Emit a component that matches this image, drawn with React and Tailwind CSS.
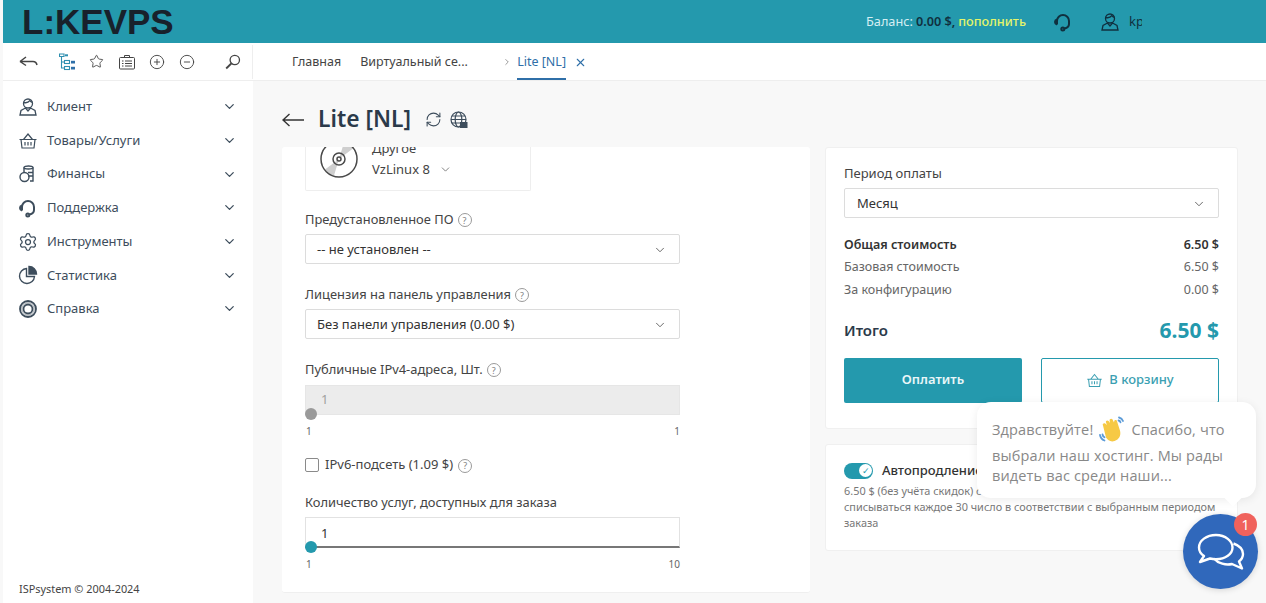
import React from 'react';
import { ChevronDown, CirclePlus, CircleMinus, Star, X, RefreshCw, Settings, ChevronRight } from 'lucide-react';

const ink = '#3d4d5c';

const UserIcon = ({ size = 20, color = ink }) => (
  <svg width={size} height={size} viewBox="0 0 20 20" fill="none" stroke={color} strokeWidth="1.3">
    <circle cx="10" cy="6.5" r="4.5" />
    <path d="M5.6 5.5c2.5.6 5-.2 6.2-1.8.6.9 1.500 1.400 2.600 1.600" />
    <path d="M7.500 11l-4.500 2.500-1 4.500h16l-1-4.500-4.500-2.500-2.500 3z" />
  </svg>
);

const BasketIcon = ({ size = 20, color = ink }) => (
  <svg width={size} height={size} viewBox="0 0 20 20" fill="none" stroke={color} strokeWidth="1.2">
    <path d="M1.500 8.500h17M3 8.500l1 8.500h12l1-8.500M5.500 8.500L10 3l4.500 5.500" />
    <path d="M7 11v3.500M10 11v3.500M13 11v3.500" />
  </svg>
);

const CoinsIcon = () => (
  <svg width="20" height="20" viewBox="0 0 20 20" fill="none" stroke={ink} strokeWidth="1.4">
    <path d="M6 8V3.500C6 2.700 8 2 10.500 2S15 2.700 15 3.500V17h-3" />
    <path d="M6 3.500c0 .8 2 1.500 4.500 1.500S15 4.300 15 3.500M10 8.500h5M10 12h5" />
    <circle cx="6.500" cy="13" r="4.500" />
  </svg>
);

const HeadsetIcon = ({ size = 20, color = ink, width = 2 }) => (
  <svg width={size} height={size} viewBox="0 0 20 20" fill="none" stroke={color} strokeWidth={width}>
    <path d="M4 12.500V9a6 6 0 0 1 12 0v3c0 2.500-2 4-4.500 4.500" />
    <path d="M4 7.500c-1.500.5-2 1.500-2 2.500s.5 2 2 2.500" fill={color} />
    <circle cx="9.800" cy="17" r="1.500" />
  </svg>
);

const PieIcon = () => (
  <svg width="20" height="20" viewBox="0 0 20 20" fill="none" stroke={ink} strokeWidth="1.4">
    <path d="M8.500 3.500a7.500 7.500 0 1 0 8 8h-8z" />
    <path d="M11 1.500a7.500 7.500 0 0 1 7.500 7.500H11z" fill={ink} />
  </svg>
);

const RingIcon = () => (
  <svg width="20" height="20" viewBox="0 0 20 20" fill="none" stroke={ink}>
    <circle cx="10" cy="10" r="8" strokeWidth="1.800" />
    <circle cx="10" cy="10" r="4.500" strokeWidth="1.800" />
    <circle cx="10" cy="10" r="6.200" strokeWidth="1" opacity="0.5" />
  </svg>
);

const TreeIcon = () => (
  <svg width="16" height="18" viewBox="0 0 16 18" fill="none" stroke="#2f8fb0" strokeWidth="1.100">
    <path d="M0.500 1h4.500v2.500H0.500zM2.500 3.500V15h3M2.500 9h3" />
    <rect x="6" y="1.300" width="3" height="2" fill="#2f8fb0" stroke="none" />
    <rect x="5.500" y="7.500" width="5" height="3" />
    <rect x="12" y="7.800" width="4" height="2.700" fill="#2f6fa8" stroke="none" />
    <rect x="5.500" y="13.500" width="5" height="3" />
    <rect x="12" y="13.800" width="4" height="2.700" fill="#2f6fa8" stroke="none" />
  </svg>
);

const CaseIcon = () => (
  <svg width="16" height="16" viewBox="0 0 16 16" fill="none" stroke="#444" strokeWidth="1">
    <rect x="0.500" y="3.500" width="15" height="11.500" rx="1" />
    <path d="M5.500 3.500V1.500h5v2M3 7h1.500M6 7h7M3 9.500h1.500M6 9.500h7M3 12h1.500M6 12h7" />
  </svg>
);

const SearchIcon = () => (
  <svg width="16" height="16" viewBox="0 0 16 16" fill="none" stroke="#444" strokeWidth="1.300">
    <circle cx="9.800" cy="6" r="4.700" />
    <path d="M6.300 9.500L1.200 14.500" strokeWidth="1.800" />
  </svg>
);

const BackIcon = () => (
  <svg width="19" height="12" viewBox="0 0 19 12" fill="none" stroke="#444" strokeWidth="1.500">
    <path d="M1 5.500L7 1M1 5.500L7 9.500M1 5.500h13c2 0 3.500 1.200 4 3.500" />
  </svg>
);

const TitleArrow = () => (
  <svg width="22" height="14" viewBox="0 0 22 14" fill="none" stroke="#333" strokeWidth="1.400">
    <path d="M1 7h21M7.500 1L1 7l6.500 6" />
  </svg>
);

const WebIcon = () => (
  <svg width="18" height="18" viewBox="0 0 18 18" fill="none" stroke={ink} strokeWidth="1.200">
    <circle cx="8.500" cy="8.500" r="7.500" />
    <ellipse cx="8.500" cy="8.500" rx="3.300" ry="7.500" />
    <path d="M1 8.500h15M2 5h13M2 12h13" />
    <rect x="10" y="11" width="7.500" height="6" fill={ink} stroke="none" />
  </svg>
);

const DiscIcon = () => (
  <svg width="38" height="38" viewBox="0 0 38 38" fill="none" stroke="#4a4a4a" strokeWidth="1.500">
    <path d="M19 19L24 2.500a18 18 0 0 1 9 6zM19 19L14 35.500a18 18 0 0 1-9-6z" fill="#cfcfcf" stroke="none" />
    <circle cx="19" cy="19" r="18" />
    <circle cx="19" cy="19" r="6" />
    <circle cx="19" cy="19" r="2" />
  </svg>
);

const HelpMark = () => (
  <span className="inline-flex h-[14px] w-[14px] items-center justify-center rounded-full border border-[#9a9a9a] text-[9px] leading-none text-[#808080]">?</span>
);

const WaveIcon = () => (
  <svg width="28" height="28" viewBox="0 0 28 28" fill="none">
    <path d="M5 9.500c-1-1.500.8-3 2.200-2L9 9 8 6.500c-.7-1.700 1.500-2.800 2.600-1.400l1.400 2L11.600 4.500c-.3-1.800 2.100-2.500 3-.9l1.400 3 .2-1.400c.3-1.700 2.600-1.500 2.900.2l3 9.600c1 4.500-1 8.500-5.500 10-3.800 1.200-6.800-.5-8.600-3.500z" fill="#f6c945" />
    <path d="M21 1.500c1.800.4 3.300 1.500 4 3.500M20.500 4.500c1 .2 1.700.8 2 1.800M2 19c.4 2.500 1.800 4.400 4.500 5.500M4.500 18.500c.2 1.300.8 2.200 2 2.800" stroke="#5b9bd8" strokeWidth="1.800" strokeLinecap="round" />
  </svg>
);

const ChatIcon = () => (
  <svg width="48" height="40" viewBox="0 0 48 40" fill="none" stroke="#fff" strokeWidth="2.400" strokeLinejoin="round">
    <path d="M19 3C9.500 3 2 8.500 2 15.500c0 3.500 2 6.500 5 8.500L3 30l10-3.500c2 .5 4 .7 6 .7 9.500 0 16.500-5.300 16.500-11.700S28.500 3 19 3z" />
    <path d="M36.500 11.500C42 13.500 46 17.500 46 22c0 3-1.500 5.500-4 7.500l3 7-10-4.500c-6 1.500-14-.5-18-5.500" />
  </svg>
);

const menu = [
  { label: 'Клиент', icon: <UserIcon /> },
  { label: 'Товары/Услуги', icon: <BasketIcon /> },
  { label: 'Финансы', icon: <CoinsIcon /> },
  { label: 'Поддержка', icon: <HeadsetIcon /> },
  { label: 'Инструменты', icon: <Settings size={20} color={ink} strokeWidth={1.5} /> },
  { label: 'Статистика', icon: <PieIcon /> },
  { label: 'Справка', icon: <RingIcon /> },
];

const Field = ({ label, value }) => (
  <div className="flex flex-col">
    <div className="flex h-[20px] items-center gap-[4px] text-[12.9px] text-[#444]">
      {label} <HelpMark />
    </div>
    <div className="mt-[4px] flex h-[30px] w-[375px] items-center justify-between rounded-[2px] border border-[#dcdcdc] bg-white pl-[11px] pr-[12px] pt-[2px] text-[13px] text-[#333]">
      {value}
      <ChevronDown size={14} color="#555" strokeWidth={1.5} />
    </div>
  </div>
);

const Slider = ({ value, max, disabled }) => (
  <div className="w-[375px]">
    <div className={disabled
      ? 'relative flex h-[30px] items-center border border-[#e6e6e6] bg-[#ececec] pl-[15px] text-[13px] text-[#a0a0a0]'
      : 'relative flex h-[31px] items-center border border-b-2 border-[#e2e2e2] border-b-[#777] bg-white pl-[15px] pt-[3px] text-[13px] text-[#333]'}>
      {value}
      <span className={disabled
        ? 'absolute bottom-[-6px] left-[-1px] h-[12px] w-[12px] rounded-full bg-[#9a9a9a]'
        : 'absolute bottom-[-7px] left-[-1px] h-[12px] w-[12px] rounded-full bg-[#2499ad]'} />
    </div>
    <div className="mt-[9px] flex justify-between text-[10px] leading-[14px] text-[#666]">
      <span className="pl-[1px]">1</span>
      <span>{max}</span>
    </div>
  </div>
);

const PriceRow = ({ label, value, strong }) => (
  <div className={strong
    ? 'flex h-[22.5px] items-center justify-between text-[12.5px] font-semibold text-[#333]'
    : 'flex h-[22.5px] items-center justify-between text-[12.5px] text-[#666]'}>
    <span>{label}</span>
    <span>{value}</span>
  </div>
);

export default function App() {
  return (
    <div className="relative flex h-[603px] w-[1266px] flex-col overflow-hidden bg-[#f8f8f8] pl-[3px] font-['Noto_Sans',sans-serif]">
      <header className="flex h-[43px] shrink-0 items-center justify-between bg-[#2499ad] pl-[19px] pr-[124px]">
        <span className="font-['Liberation_Sans',sans-serif] text-[35px] font-bold leading-none text-[#18212b]">L:KEVPS</span>
        <div className="flex items-center text-[12.7px]">
          <span className="text-[#d5eef2]">Баланс:</span>
          <span className="ml-[3px] font-semibold text-[#10303f]">0.00 $,</span>
          <span className="ml-[3px] font-medium text-[#e4f56a]">пополнить</span>
          <span className="ml-[27px]"><HeadsetIcon size={20} color="#10303f" width={2} /></span>
          <span className="ml-[27px]"><UserIcon size={20} color="#10303f" /></span>
          <span className="ml-[9px] w-[13px] overflow-hidden text-[13px] text-[#10303f]">kp</span>
        </div>
      </header>

      <div className="flex h-[38px] shrink-0 items-center border-b border-[#eeeeee] bg-white">
        <div className="flex w-[250px] items-center border-r border-[#eeeeee] py-[8px] pl-[16px]">
          <BackIcon />
          <span className="ml-[21px]"><TreeIcon /></span>
          <span className="ml-[14px]"><Star size={15} color="#444" strokeWidth={1.4} /></span>
          <span className="ml-[15px]"><CaseIcon /></span>
          <span className="ml-[14px]"><CirclePlus size={16} color="#444" strokeWidth={1.4} /></span>
          <span className="ml-[14px]"><CircleMinus size={16} color="#444" strokeWidth={1.4} /></span>
          <span className="ml-[30px]"><SearchIcon /></span>
        </div>
        <nav className="flex h-full items-center pl-[39px] pt-[1px] text-[12.5px] text-[#444]">
          <span>Главная</span>
          <span className="ml-[19px] w-[126px]">Виртуальный се...</span>
          <ChevronRight size={10} color="#888" className="ml-[16px]" />
          <span className="relative ml-[5px] flex h-full items-center text-[#2f6fa8]">
            Lite [NL]
            <span className="absolute bottom-0 left-0 h-[2px] w-full bg-[#2f6fa8]" />
          </span>
          <X size={13} color="#2f6fa8" strokeWidth={2} className="ml-[8px]" />
        </nav>
      </div>

      <div className="flex min-h-0 flex-1">
        <aside className="flex w-[250px] shrink-0 flex-col justify-between bg-white pb-[7px] pl-[15px] pr-[16px] pt-[9px]">
          <ul className="flex flex-col">
            {menu.map((item) => (
              <li key={item.label} className="flex h-[33.7px] items-center text-[13px] text-[#3d4d5c]">
                <span className="flex w-[29px] shrink-0">{item.icon}</span>
                <span className="flex-1">{item.label}</span>
                <ChevronDown size={15} color={ink} strokeWidth={2} />
              </li>
            ))}
          </ul>
          <span className="ml-[1px] text-[10.9px] leading-[14px] text-[#444]">ISPsystem © 2004-2024</span>
        </aside>

        <main className="min-w-0 flex-1 pl-[29px]">
          <div className="flex h-[66px] items-center pt-[11px]">
            <TitleArrow />
            <h1 className="ml-[14px] text-[22.8px] font-semibold text-[#2b3a4a]">Lite [NL]</h1>
            <RefreshCw size={17} color={ink} strokeWidth={1.5} className="ml-[14px]" />
            <span className="ml-[8px]"><WebIcon /></span>
          </div>

          <div className="flex items-start">
            <section className="h-[446px] w-[528px] overflow-hidden rounded-[3px] border-b border-[#efefef] bg-white pl-[23px]">
              <div className="flex h-[44px] w-[226px] items-start overflow-hidden rounded-b-[2px] border border-t-0 border-[#eeeeee] pl-[14px]">
                <span className="mt-[-7px] flex"><DiscIcon /></span>
                <div className="ml-[14px] mt-[-9px] flex flex-col text-[13px] leading-[21px] text-[#444]">
                  <span>Другое</span>
                  <span className="flex items-center gap-[9px]">VzLinux 8 <ChevronDown size={13} color="#666" strokeWidth={1.5} /></span>
                </div>
              </div>
              <div className="mt-[19px]"><Field label="Предустановленное ПО" value="-- не установлен --" /></div>
              <div className="mt-[21px]"><Field label="Лицензия на панель управления" value="Без панели управления (0.00 $)" /></div>
              <div className="mt-[21px] flex flex-col">
                <div className="flex h-[20px] items-center gap-[4px] text-[12.9px] text-[#444]">Публичные IPv4-адреса, Шт. <HelpMark /></div>
                <div className="mt-[5px]"><Slider value="1" max="1" disabled /></div>
              </div>
              <label className="mt-[17px] flex h-[20px] items-center text-[13px] text-[#444]">
                <span className="h-[14px] w-[14px] rounded-[2px] border border-[#8a8a8a] bg-white" />
                <span className="ml-[6px]">IPv6-подсеть (1.09 $)</span>
                <span className="ml-[5px]"><HelpMark /></span>
              </label>
              <div className="mt-[18px] flex flex-col">
                <div className="flex h-[20px] items-center text-[12.9px] text-[#444]">Количество услуг, доступных для заказа</div>
                <div className="mt-[4px]"><Slider value="1" max="10" /></div>
              </div>
            </section>

            <div className="ml-[15px] flex w-[413px] flex-col gap-[15px]">
              <section className="h-[282px] rounded-[3px] border border-[#f0f0f0] bg-white px-[18px] pt-[15px]">
                <div className="text-[13px] leading-[20px] text-[#444]">Период оплаты</div>
                <div className="mt-[5px] flex h-[30px] items-center justify-between rounded-[2px] border border-[#dcdcdc] px-[12px] pt-[2px] text-[13px] text-[#333]">
                  Месяц
                  <ChevronDown size={14} color="#555" strokeWidth={1.5} />
                </div>
                <div className="mt-[16px] flex flex-col">
                  <PriceRow label="Общая стоимость" value="6.50 $" strong />
                  <PriceRow label="Базовая стоимость" value="6.50 $" />
                  <PriceRow label="За конфигурацию" value="0.00 $" />
                </div>
                <div className="mt-[13px] flex h-[32px] items-center justify-between">
                  <span className="text-[15px] font-semibold text-[#2b3a4a]">Итого</span>
                  <span className="text-[21px] font-bold text-[#2499ad]">6.50 $</span>
                </div>
                <div className="mt-[11px] flex justify-between">
                  <button className="h-[45px] w-[178px] rounded-[2px] bg-[#2499ad] text-[13px] font-semibold text-[#e9f6f8]">Оплатить</button>
                  <button className="flex h-[45px] w-[178px] items-center justify-center gap-[6px] rounded-[2px] border border-[#2499ad] bg-white text-[13px] font-medium text-[#3b9fb2]">
                    <BasketIcon size={17} color="#3b9fb2" /> В корзину
                  </button>
                </div>
              </section>

              <section className="h-[107px] rounded-[3px] border border-[#f0f0f0] bg-white px-[18px] pt-[16px]">
                <div className="flex items-center">
                  <span className="flex h-[16px] w-[29px] items-center justify-end rounded-full bg-[#2499ad] pr-[1px]">
                    <span className="flex h-[13px] w-[13px] items-center justify-center rounded-full bg-white text-[9px] leading-none text-[#2499ad]">✓</span>
                  </span>
                  <span className="ml-[9px] text-[13px] font-medium text-[#333]">Автопродление</span>
                </div>
                <p className="mt-[2px] whitespace-nowrap text-[10.9px] leading-[16px] text-[#777]">
                  6.50 $ (без учёта скидок) с вашего баланса будет
                  <br />
                  списываться каждое 30 число в соответствии с выбранным периодом
                  <br />
                  заказа
                </p>
              </section>
            </div>
          </div>
        </main>
      </div>

      <div className="absolute left-[977px] top-[402px] h-[96px] w-[279px] rounded-[14px] bg-white pl-[15px] pr-[10px] pt-[14px] font-['Open_Sans',sans-serif] text-[14.5px] tracking-[0.15px] text-[#888] shadow-[0_2px_10px_rgba(0,0,0,0.08)]">
        <div className="flex h-[27px] items-center whitespace-nowrap">
          Здравствуйте!
          <span className="mx-[5px] flex"><WaveIcon /></span>
          Спасибо, что
        </div>
        <div className="whitespace-nowrap leading-[26px]">выбрали наш хостинг. Мы рады</div>
        <div className="mt-[-6px] whitespace-nowrap leading-[26px]">видеть вас среди наши...</div>
        <span className="absolute bottom-[-6px] right-[17px] h-[12px] w-[12px] rotate-45 bg-white" />
      </div>
      <div className="absolute left-[1183px] top-[514px] flex h-[75px] w-[75px] items-center justify-center rounded-full bg-[#3068bb] shadow-[0_1px_6px_rgba(0,0,0,0.15)]">
        <ChatIcon />
        <span className="absolute right-[1px] top-[-1px] flex h-[23px] w-[23px] items-center justify-center rounded-full bg-[#f0625c] text-[14px] text-white">1</span>
      </div>
    </div>
  );
}
